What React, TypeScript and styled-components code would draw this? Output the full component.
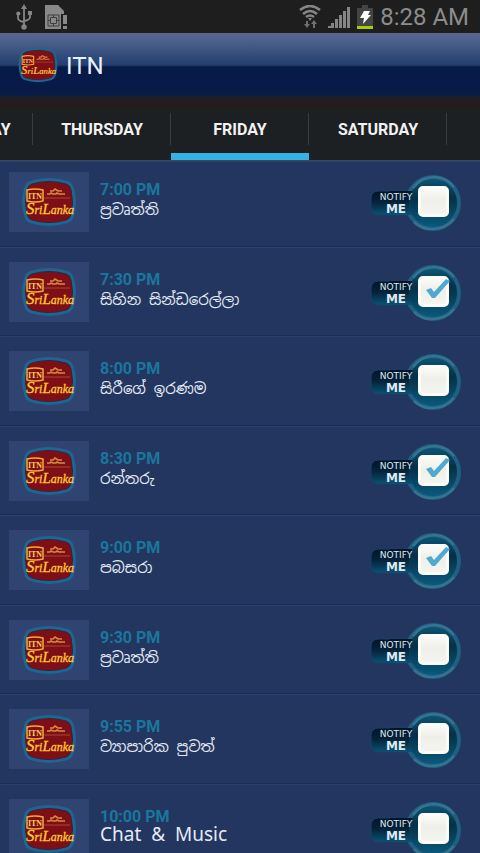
import React, { useState } from 'react';
import styled, { createGlobalStyle } from 'styled-components';

const GlobalStyle = createGlobalStyle`
  * { box-sizing: border-box; }
  body { margin: 0; background: #22365f; font-family: Roboto, 'Noto Sans', sans-serif; }
`;

const Screen = styled.div`
  display: flex;
  flex-direction: column;
  height: 100vh;
  overflow: hidden;
  background: #22365f;
`;

const StatusBar = styled.div`
  flex: none;
  display: flex;
  align-items: center;
  justify-content: space-between;
  height: 33px;
  padding: 0 11px 0 16px;
  background: #1e1e1e;
  color: #8c8c8c;
`;

const StatusIcons = styled.div`
  display: flex;
  align-items: center;
  gap: 12px;
`;

const StatusRight = styled.div`
  display: flex;
  align-items: center;
  gap: 7px;
`;

const Clock = styled.time`
  font-size: 24px;
  line-height: 32px;
`;

const Header = styled.header`
  flex: none;
  display: flex;
  align-items: center;
  gap: 8px;
  height: 64px;
  padding: 0 18px;
  background: linear-gradient(#5a678d 0, #4b618c 8px, #223f6e 32px, #061a48 34px, #091b48 62px, #1b2029 64px);
`;

const Title = styled.h1`
  margin: 0;
  padding-top: 2px;
  color: #e9f1ff;
  font-size: 24px;
  font-weight: 400;
  line-height: 32px;
`;

const TabBar = styled.nav`
  flex: none;
  display: flex;
  justify-content: center;
  height: 64px;
  padding-top: 10px;
  overflow: hidden;
  background: linear-gradient(#1c1f22 0, #241c1c 8px, #1d2022 14px, #1d2022 100%);
  border-bottom: 1px solid #3d4757;
`;

const Tab = styled.button<{ $active: boolean }>`
  flex: none;
  width: 138px;
  padding: 0;
  border: 0;
  border-bottom: 7px solid ${(p) => (p.$active ? '#36b2e2' : 'transparent')};
  background: linear-gradient(#3a3d40, #3a3d40) right 6px / 1px 32px no-repeat;
  color: #f2f2f2;
  font: 700 16px/24px Roboto, sans-serif;
  cursor: pointer;
`;

const List = styled.ul`
  flex: 1;
  min-height: 0;
  margin: 0;
  padding: 0;
  overflow: hidden;
  list-style: none;
`;

const Row = styled.li`
  display: flex;
  align-items: flex-start;
  gap: 11px;
  padding: 14px 18px 13px 9px;
  border-top: 1px solid #2b4270;
  border-bottom: 1px solid #192c55;

  &:nth-child(odd) { padding-bottom: 14px; }
  &:first-child { padding-top: 10px; }
`;

const Thumb = styled.div`
  flex: none;
  display: flex;
  align-items: center;
  justify-content: center;
  width: 80px;
  height: 60px;
  background: #2f4470;
`;

const Info = styled.div`
  flex: 1;
  min-width: 0;
  padding-top: 8px;
`;

const Time = styled.div`
  color: #1b769d;
  font-size: 16px;
  font-weight: 700;
  line-height: 19px;
`;

const Show = styled.div<{ $latin: boolean }>`
  color: #e4eaf5;
  font-family: 'Noto Sans', 'Noto Sans Sinhala', sans-serif;
  font-size: ${(p) => (p.$latin ? 19 : 15)}px;
  line-height: ${(p) => (p.$latin ? 17 : 20)}px;
  white-space: pre;
`;

const Notify = styled.label`
  flex: none;
  display: grid;
  width: 92px;
  height: 58px;
  margin-top: 2px;
  cursor: pointer;

  & > * { grid-area: 1 / 1; }
`;

const Caption = styled.span`
  display: flex;
  flex-direction: column;
  align-items: center;
  justify-self: start;
  width: 52px;
  padding-top: 18px;
  color: #dfeaf0;
  font-family: 'DejaVu Sans', sans-serif;
`;

const CaptionTop = styled.span`
  font-size: 9px;
  line-height: 11px;
`;

const CaptionMain = styled.span`
  font-size: 12px;
  font-weight: 700;
  line-height: 12px;
`;

const Check = styled.input`
  appearance: none;
  width: 31px;
  height: 31px;
  margin: 12px 13px 0 0;
  justify-self: end;
  border: 3px solid #fbfcfa;
  border-radius: 5px;
  background: linear-gradient(#fafaf7, #efefe9 45%, #f4f5f0);
  cursor: pointer;
`;

const Tick = styled.svg`
  justify-self: end;
  margin: 12px 12px 0 0;
  pointer-events: none;
`;

function Logo({ width, height }: { width: number; height: number }) {
  return (
    <svg width={width} height={height} viewBox="0 0 54 50" role="img" aria-label="ITN Sri Lanka">
      <path d="M8 4Q27-2 46 4Q51 6 52 12Q56 25 52 38Q51 44 46 46Q27 52 8 46Q3 44 2 38Q-2 25 2 12Q3 6 8 4Z" fill="#1d6692" />
      <path d="M10 7Q27 2 44 7Q48 8 49 13Q52 25 49 37Q48 42 44 43Q27 48 10 43Q6 42 5 37Q2 25 5 13Q6 8 10 7Z" fill="#7f0f16" stroke="#39213d" />
      <path d="M5 13Q13 11 21 13V24Q13 26 5 24Z" fill="none" stroke="#f0ad3b" strokeWidth="1.5" />
      <text x="13" y="22" textAnchor="middle" fill="#ffd154" fontFamily="Liberation Serif" fontSize="8" fontWeight="700">ITN</text>
      <path d="M28 14h3l2-2 3 2h4M25 17h3l1-1 2 1h3l1-1 2 1h6" fill="none" stroke="#d98a42" strokeWidth="1.6" />
      <path d="M22 21H48" stroke="#a94a2b" />
      <text x="28" y="37" textAnchor="middle" fill="#ffc834" stroke="#ffc834" strokeWidth="0.3" fontFamily="Liberation Serif" fontStyle="italic" fontSize="12">
        <tspan fontSize="17">S</tspan>ri<tspan fontSize="15">L</tspan>anka
      </text>
    </svg>
  );
}

function UsbIcon() {
  return (
    <svg width="16" height="26" viewBox="0 0 16 26" fill="none" stroke="#858585" strokeWidth="1.8" aria-hidden="true">
      <path d="M8 3V23M2 10V14Q2 17 8 18M14 9V13Q14 16 8 17" />
      <path d="M8 0L11 5H5Z" fill="#858585" stroke="none" />
      <circle cx="8" cy="23" r="2.7" fill="#858585" stroke="none" />
      <circle cx="2.3" cy="9.5" r="2.1" fill="#858585" stroke="none" />
      <path d="M12 7h4v4h-4z" fill="#858585" stroke="none" />
    </svg>
  );
}

function SimIcon() {
  return (
    <svg width="24" height="26" viewBox="0 0 24 26" aria-hidden="true">
      <path d="M1 1H14L20 7V10H17V25H1Z" fill="#898989" />
      <path d="M4 11H15V22H4Z" fill="none" stroke="#3d3d3d" />
      <path d="M6.500 13.500H12.500V19.500H6.500ZM4 16.500H6M13 16.500H15M9.500 11V13M9.500 20V22" fill="none" stroke="#3d3d3d" />
      <path d="M19 11H23V20H19ZM19 22H23V25H19Z" fill="#898989" />
    </svg>
  );
}

function WifiIcon() {
  return (
    <svg width="22" height="24" viewBox="0 0 22 24" fill="none" stroke="#858585" strokeWidth="2.6" aria-hidden="true">
      <path d="M1 5Q11-3 21 5M4 9Q11 3 18 9M7 12Q11 9 15 12" />
      <path d="M9 13h4l-2 3z" fill="#858585" stroke="none" />
      <path d="M7 16v3H5l3 4 3-4H9v-3zM14 23v-4h-2l3-4 3 4h-2v4z" fill="#707070" stroke="none" />
    </svg>
  );
}

function SignalIcon() {
  return (
    <svg width="22" height="22" viewBox="0 0 22 22" fill="#858585" aria-hidden="true">
      <path d="M0 20h3v2H0zM3 17h3v5H3zM7 13h3v9H7zM11 9h3v13h-3zM15 5h3v17h-3zM19 1h3v21h-3z" />
    </svg>
  );
}

function BatteryIcon() {
  return (
    <svg width="16" height="24" viewBox="0 0 16 24" aria-hidden="true">
      <path d="M5 0h6v3h5v18H0V3h5z" fill="#444" />
      <path d="M0 21h16v3H0z" fill="#a5cc13" />
      <path d="M7 6h6l-2 4h3L6 19l1-6H3z" fill="#fff" />
    </svg>
  );
}

function NotifyPlate({ id }: { id: string }) {
  return (
    <svg width="92" height="58" viewBox="0 0 92 58" aria-hidden="true">
      <defs>
        <linearGradient id={`${id}-pill`} x1="0" y1="0" x2="0" y2="1">
          <stop offset="0" stopColor="#04142a" />
          <stop offset="0.45" stopColor="#052239" />
          <stop offset="1" stopColor="#0b5276" />
        </linearGradient>
        <linearGradient id={`${id}-disc`} x1="0" y1="0" x2="0" y2="1">
          <stop offset="0" stopColor="#0e5878" />
          <stop offset="0.4" stopColor="#053048" />
          <stop offset="1" stopColor="#0a5c80" />
        </linearGradient>
      </defs>
      <rect x="1" y="17" width="52" height="24" rx="7" fill={`url(#${id}-pill)`} stroke="#14456b" />
      <circle cx="63" cy="29" r="26" fill={`url(#${id}-disc)`} stroke="#1f5f80" strokeWidth="4" />
      <path d="M43 14Q51 3 65 3Q77 4 84 13M84 45Q76 55 62 55Q51 55 44 48" fill="none" stroke="#347490" strokeWidth="2.5" />
      <path d="M42 18Q36 29 42 40V41H20V17H42Z" fill={`url(#${id}-pill)`} />
    </svg>
  );
}

const days = ['WEDNESDAY', 'THURSDAY', 'FRIDAY', 'SATURDAY', 'SUNDAY'];

const shows = [
  { time: '7:00 PM', name: 'ප්‍රවෘත්ති', on: false },
  { time: '7:30 PM', name: 'සිහින  සින්ඩරෙල්ලා', on: true },
  { time: '8:00 PM', name: 'සිරීගේ  ඉරණම', on: false },
  { time: '8:30 PM', name: 'රන්තරු', on: true },
  { time: '9:00 PM', name: 'පබසරා', on: true },
  { time: '9:30 PM', name: 'ප්‍රවෘත්ති', on: false },
  { time: '9:55 PM', name: 'ව්‍යාපාරික  පුවත්', on: false },
  { time: '10:00 PM', name: 'Chat  &  Music', on: false, latin: true },
];

export default function App() {
  const [day, setDay] = useState('FRIDAY');
  const [marked, setMarked] = useState(shows.map((s) => s.on));

  return (
    <Screen>
      <GlobalStyle />
      <StatusBar>
        <StatusIcons>
          <UsbIcon />
          <SimIcon />
        </StatusIcons>
        <StatusRight>
          <WifiIcon />
          <SignalIcon />
          <BatteryIcon />
          <Clock>8:28 AM</Clock>
        </StatusRight>
      </StatusBar>
      <Header>
        <Logo width={40} height={36} />
        <Title>ITN</Title>
      </Header>
      <TabBar>
        {days.map((d) => (
          <Tab key={d} $active={d === day} onClick={() => setDay(d)}>{d}</Tab>
        ))}
      </TabBar>
      <List>
        {shows.map((s, i) => (
          <Row key={s.time}>
            <Thumb><Logo width={54} height={50} /></Thumb>
            <Info>
              <Time>{s.time}</Time>
              <Show $latin={!!s.latin}>{s.name}</Show>
            </Info>
            <Notify>
              <NotifyPlate id={`plate${i}`} />
              <Caption>
                <CaptionTop>NOTIFY</CaptionTop>
                <CaptionMain>ME</CaptionMain>
              </Caption>
              <Check
                type="checkbox"
                checked={marked[i]}
                onChange={() => setMarked(marked.map((m, j) => (j === i ? !m : m)))}
              />
              {marked[i] && (
                <Tick width="31" height="31" viewBox="0 0 31 31" aria-hidden="true">
                  <path d="M7 14L12 12L15 16L27 3L31 5L16 22H13Z" fill="#51a9cf" />
                </Tick>
              )}
            </Notify>
          </Row>
        ))}
      </List>
    </Screen>
  );
}
